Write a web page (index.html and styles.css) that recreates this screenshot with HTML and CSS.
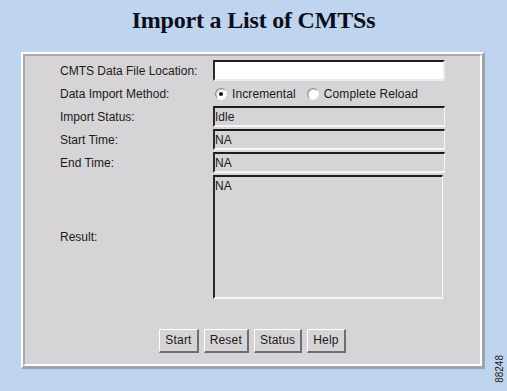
FILE: index.html
```html
<!DOCTYPE html>
<html>
<head>
<meta charset="utf-8">
<title>Import a List of CMTSs</title>
<link rel="stylesheet" href="styles.css">
</head>
<body>
<h1 class="title">Import a List of CMTSs</h1>
<div class="panel">
  <div class="panel-inner">
    <div class="form">
      <div class="label">CMTS Data File Location:</div>
      <div class="field field-input"></div>

      <div class="label">Data Import Method:</div>
      <div class="radios">
        <span class="radio checked"></span><span class="radio-text">Incremental</span>
        <span class="radio"></span><span class="radio-text">Complete Reload</span>
      </div>

      <div class="label">Import Status:</div>
      <div class="field">Idle</div>

      <div class="label">Start Time:</div>
      <div class="field">NA</div>

      <div class="label">End Time:</div>
      <div class="field">NA</div>

      <div class="label">Result:</div>
      <div class="field field-area">NA</div>
    </div>
    <div class="buttons">
      <span class="btn">Start</span>
      <span class="btn">Reset</span>
      <span class="btn">Status</span>
      <span class="btn">Help</span>
    </div>
  </div>
</div>
<div class="figno">88248</div>
</body>
</html>
```

FILE: styles.css
```css
html, body {
  margin: 0;
  padding: 0;
}
body {
  background: #bfd4ee;
  width: 507px;
  height: 391px;
  position: relative;
  overflow: hidden;
  font-family: "Liberation Sans", Arial, sans-serif;
  font-size: 12px;
  color: #1a1a1a;
}
.title {
  margin: 0;
  padding-top: 6px;
  height: 46px;
  line-height: 28px;
  font-family: "Liberation Serif", "Times New Roman", serif;
  font-weight: bold;
  font-size: 24px;
  letter-spacing: -0.2px;
  text-align: center;
  color: #0d0d1a;
}
.panel {
  margin-left: 21px;
  width: 459px;
  border-style: solid;
  border-width: 2px 3px 3px 2px;
  border-color: #ffffff #9ea3aa #9ea3aa #ffffff;
}
.panel-inner {
  border-style: solid;
  border-width: 2px;
  border-color: #a9a9ae #ffffff #ffffff #a9a9ae;
  background: #d7d4d7;
  padding: 4px 0 11px 35px;
}
.form {
  display: grid;
  grid-template-columns: 153px 232px;
  grid-template-rows: repeat(5, 21px) 124px;
  row-gap: 2px;
  align-items: center;
}
.label {
  line-height: 14px;
  white-space: nowrap;
}
.field {
  box-sizing: border-box;
  height: 21px;
  border-style: solid;
  border-width: 2px 1px 2px 2px;
  border-color: #1c1c1c #f6f6f6 #f6f6f6 #2a2a2a;
  padding: 2px 0 0 0;
  line-height: 14px;
  background: #d7d4d7;
}
.field-input {
  background: #ffffff;
  border-right-width: 2px;
  border-color: #1c1c1c #ececec #ececec #2a2a2a;
}
.form .field-area {
  height: 124px;
  width: 230px;
  margin-top: -1px;
}
.radios {
  display: flex;
  align-items: center;
  padding-left: 2px;
}
.radio {
  box-sizing: border-box;
  width: 12px;
  height: 12px;
  border-radius: 50%;
  border: 1px solid;
  border-color: #8a8a8a #f4f4f4 #f4f4f4 #8a8a8a;
  background: #ffffff;
  box-shadow: inset 1px 1px 0 #d0d0d0;
  position: relative;
}
.radio.checked::after {
  content: "";
  position: absolute;
  left: 3px;
  top: 3px;
  width: 4px;
  height: 4px;
  border-radius: 50%;
  background: #111;
}
.radio-text {
  margin-left: 5px;
  margin-right: 11px;
  letter-spacing: 0.1px;
}
.buttons {
  display: flex;
  justify-content: center;
  gap: 5px;
  margin-top: 30px;
  padding-right: 35px;
}
.btn {
  box-sizing: border-box;
  height: 24px;
  line-height: 20px;
  padding: 0 5px;
  border-style: solid;
  border-width: 1px 2px 2px 1px;
  border-color: #ffffff #6e6e6e #6e6e6e #ffffff;
  background: #d7d4d7;
  text-align: center;
  letter-spacing: 0.2px;
}
.figno {
  position: absolute;
  left: 494px;
  top: 355px;
  writing-mode: vertical-rl;
  transform: rotate(180deg);
  font-size: 10px;
  line-height: 12px;
  color: #222;
}
```
